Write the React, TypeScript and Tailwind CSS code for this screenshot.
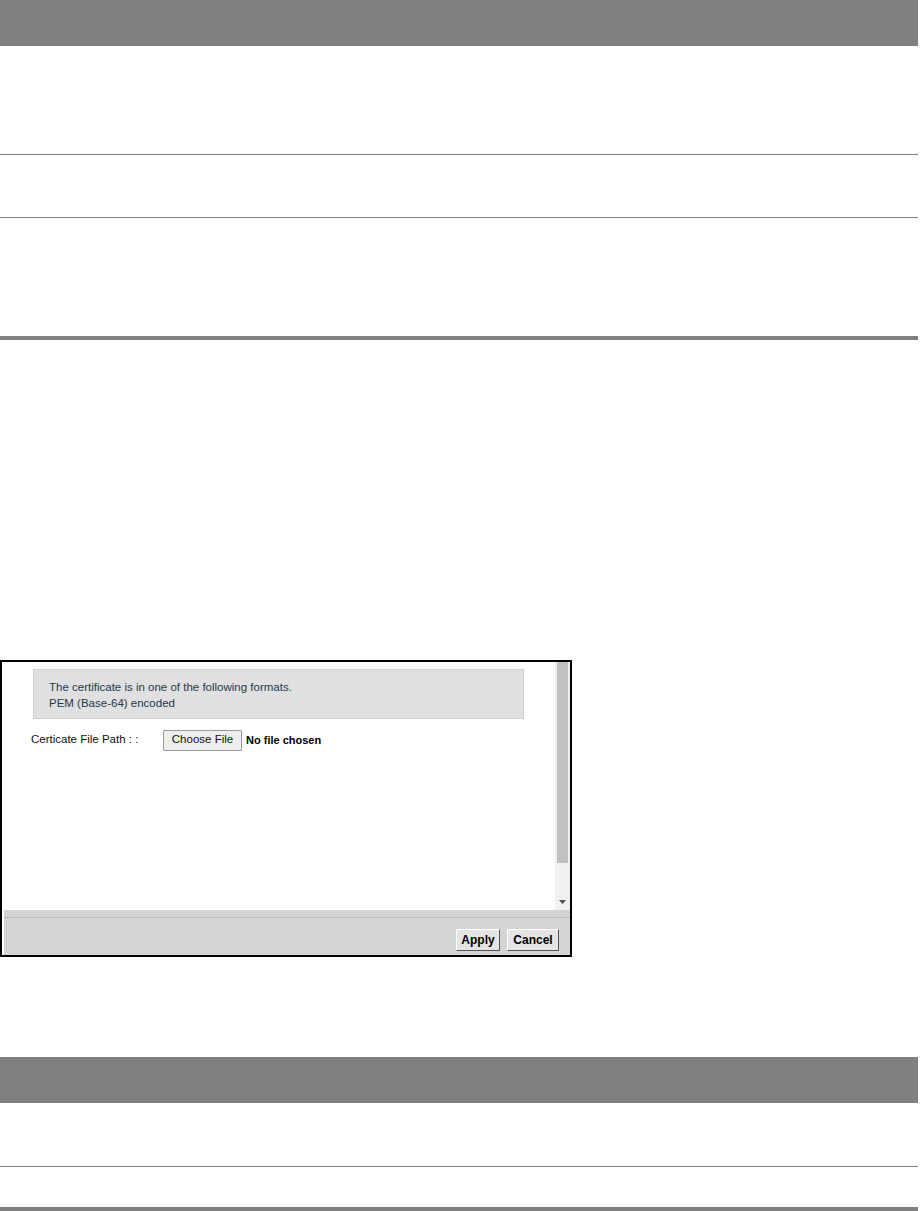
import React from "react";

export default function App() {
  return (
    <div className="w-[922px] min-h-[1211px] bg-white font-['Liberation_Sans',Arial,sans-serif]">
      {/* top table */}
      <div className="w-[918px]">
        <div className="h-[46px] bg-[#808080]" />
        <div className="h-[109px] border-b border-[#808080]" />
        <div className="h-[63px] border-b border-[#808080]" />
        <div className="h-[122px] border-b-4 border-[#808080]" />
      </div>

      {/* screenshot frame */}
      <div className="mt-[320px] w-[572px] h-[297px] border-2 border-black bg-white flex flex-col">
        <div className="flex h-[248px]">
          <div className="w-[553px] pt-[7px]">
            <div className="ml-[31px] w-[491px] h-[50px] bg-[#e0e0e0] border border-dotted border-[#c4c4c4] pl-[15px] pt-[9px] text-[11.5px] leading-[16px] text-[#1e3a4f]">
              <div>The certificate is in one of the following formats.</div>
              <div>PEM (Base-64) encoded</div>
            </div>
            <div className="flex items-center mt-[10px] h-[22px]">
              <span className="ml-[29px] w-[132px] text-[11.5px] text-[#111]">Certicate File Path : :</span>
              <span className="w-[79px] h-[21px] flex items-center justify-center border border-[#9a9a9a] bg-[#eeeeee] text-[11.5px] text-[#111] rounded-[1px]">
                Choose File
              </span>
              <span className="ml-[4px] text-[11px] font-bold text-black">No file chosen</span>
            </div>
          </div>
          <div className="w-[15px] bg-[#f1f1f1] flex flex-col items-center">
            <div className="w-[11px] h-[201px] bg-[#c1c1c1]" />
            <div className="flex-1" />
            <svg width="7" height="5" viewBox="0 0 7 5" className="mb-[5px]">
              <polygon points="0,0 7,0 3.5,4" fill="#505050" />
            </svg>
          </div>
        </div>
        <div className="ml-[2px] flex-1 bg-[#d4d4d4] pt-[7px]">
          <div className="border-t border-dotted border-[#a8a8a8] h-full flex justify-end items-start pt-[11px] pr-[11px] gap-[7px]">
            <span className="w-[44px] h-[22px] flex items-center justify-center bg-[#e4e4e4] border border-t-white border-l-white border-r-[#555] border-b-[#555] text-[12px] font-bold text-black">
              Apply
            </span>
            <span className="w-[52px] h-[22px] flex items-center justify-center bg-[#e4e4e4] border border-t-white border-l-white border-r-[#555] border-b-[#555] text-[12px] font-bold text-black">
              Cancel
            </span>
          </div>
        </div>
      </div>

      {/* bottom table */}
      <div className="mt-[100px] w-[918px]">
        <div className="h-[46px] bg-[#808080]" />
        <div className="h-[64px] border-b border-[#808080]" />
        <div className="h-[44px] border-b-4 border-[#808080]" />
      </div>
    </div>
  );
}
